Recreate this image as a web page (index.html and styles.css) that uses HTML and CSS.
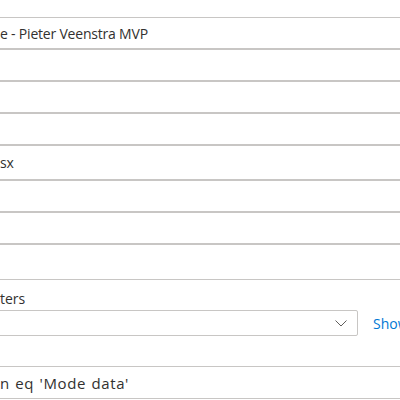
FILE: index.html
```html
<!DOCTYPE html>
<html>
<head>
<meta charset="utf-8">
<link rel="stylesheet" href="styles.css">
</head>
<body>
<div class="form">
  <div class="input h32"><span class="val">e - Pieter Veenstra MVP</span></div>
  <div class="input h32"></div>
  <div class="input h32"></div>
  <div class="input h32"></div>
  <div class="input h35"><span class="val">sx</span></div>
  <div class="input h32"></div>
  <div class="input h32"></div>
  <div class="input h36"></div>
  <div class="label">ters</div>
  <div class="dd-row">
    <div class="dropdown">
      <svg class="chev" width="12" height="7" viewBox="0 0 12 7"><path d="M0.5 0.5 L6 6 L11.5 0.5" fill="none" stroke="#605e5c" stroke-width="1"/></svg>
    </div>
    <a class="link">Show</a>
  </div>
  <div class="input h33 last"><span class="val wide">n eq 'Mode data'</span></div>
</div>
</body>
</html>
```
FILE: styles.css
```css
html, body {
  margin: 0;
  padding: 0;
  background: #ffffff;
  width: 400px;
  height: 400px;
  overflow: hidden;
}
body {
  font-family: "Open Sans", "Noto Sans", sans-serif;
  font-size: 14px;
  color: #323130;
}
.form {
  display: flex;
  flex-direction: column;
  padding-top: 17px;
}
.input {
  box-sizing: border-box;
  width: 430px;
  flex-shrink: 0;
  margin-left: -10px;
  border: 1px solid #c8c6c4;
  display: flex;
  align-items: center;
  padding-left: 9px;
  white-space: nowrap;
}
.h32 { height: 32px; }
.h33 { height: 33px; }
.h35 { height: 35px; }
.h36 { height: 36px; }
.val {
  letter-spacing: -0.2px;
}
.wide {
  font-size: 15px;
  letter-spacing: 0.6px;
  word-spacing: 1px;
}
.label {
  height: 20px;
  margin-top: 9px;
  line-height: 20px;
  padding-left: 0;
}
.dd-row {
  display: flex;
  align-items: center;
  margin-top: 1px;
  height: 26px;
  width: 430px;
}
.dropdown {
  box-sizing: border-box;
  width: 368px;
  flex-shrink: 0;
  margin-left: -10px;
  height: 26px;
  border: 1px solid #c8c6c4;
  border-radius: 2px;
  display: flex;
  align-items: center;
  justify-content: flex-end;
  padding-right: 10px;
}
.chev { display: block; }
.link {
  margin-left: 15px;
  color: #0078d4;
  white-space: nowrap;
}
.last {
  margin-top: 30px;
}
```
